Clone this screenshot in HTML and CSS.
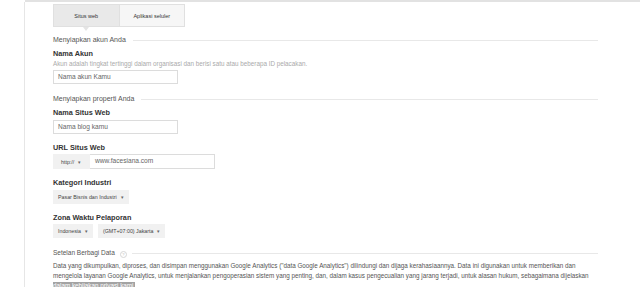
FILE: index.html
```html
<!DOCTYPE html>
<html lang="id">
<head>
    <meta charset="UTF-8">
    <title>Akun Baru - Google Analytics</title>
    <link rel="stylesheet" href="styles.css">
</head>
<body>
    <div class="topbar"></div>
    <div class="shell">
        <div class="form">
            <div class="tabs">
                <div class="tab active">Situs web</div>
                <div class="tab">Aplikasi seluler</div>
            </div>

            <h2 class="section">Menyiapkan akun Anda</h2>
            <div class="field">
                <label class="label">Nama Akun</label>
                <p class="hint">Akun adalah tingkat tertinggi dalam organisasi dan berisi satu atau beberapa ID pelacakan.</p>
                <div class="input">Nama akun Kamu</div>
            </div>

            <h2 class="section">Menyiapkan properti Anda</h2>
            <div class="field">
                <label class="label">Nama Situs Web</label>
                <div class="input">Nama blog kamu</div>
            </div>
            <div class="field">
                <label class="label">URL Situs Web</label>
                <div class="group">
                    <div class="select protocol">http:// <span class="caret">&#9662;</span></div>
                    <div class="input url">www.facesiana.com</div>
                </div>
            </div>
            <div class="field">
                <label class="label">Kategori Industri</label>
                <div class="select">Pasar Bisnis dan Industri <span class="caret">&#9662;</span></div>
            </div>
            <div class="field">
                <label class="label">Zona Waktu Pelaporan</label>
                <div class="group spaced">
                    <div class="select">Indonesia <span class="caret">&#9662;</span></div>
                    <div class="select">(GMT+07:00) Jakarta <span class="caret">&#9662;</span></div>
                </div>
            </div>

            <h2 class="section data">Setelan Berbagi Data <span class="help">?</span></h2>
            <p class="terms">Data yang dikumpulkan, diproses, dan disimpan menggunakan Google Analytics ("data Google Analytics") dilindungi dan dijaga kerahasiaannya. Data ini digunakan untuk memberikan dan mengelola layanan Google Analytics, untuk menjalankan pengoperasian sistem yang penting, dan, dalam kasus pengecualian yang jarang terjadi, untuk alasan hukum, sebagaimana dijelaskan <span class="mark">dalam kebijakan privasi kami.</span></p>
        </div>
    </div>
</body>
</html>
```

FILE: styles.css
```css
body {
    margin: 0;
    font-family: Arial, "Liberation Sans", sans-serif;
    background: #fff;
    color: #444;
}
.topbar {
    margin-left: 25px;
    height: 2px;
    background: #e2e2e2;
}
.shell {
    margin-left: 24px;
    border-left: 1px solid #e6e6e6;
}
.form {
    padding: 2px 0 0 28px;
    width: 545px;
}
.tabs {
    display: flex;
    width: 132px;
    height: 23px;
    border: 1px solid #e0e0e0;
    box-sizing: border-box;
    margin-bottom: 8px;
}
.tab {
    flex: 1;
    display: flex;
    align-items: center;
    justify-content: center;
    font-size: 5.5px;
    color: #333;
    background: #f6f6f6;
    position: relative;
}
.tab.active {
    background: #e9e9e9;
    border-right: 1px solid #e0e0e0;
}
.tab.active::after {
    content: "";
    position: absolute;
    left: 50%;
    bottom: -5px;
    margin-left: -3px;
    border-left: 3px solid transparent;
    border-right: 3px solid transparent;
    border-top: 4px solid #e4e4e4;
}
.section {
    display: flex;
    align-items: center;
    margin: 0;
    font-size: 7px;
    font-weight: normal;
    color: #555;
    height: 10px;
    line-height: 10px;
}
.section::after {
    content: "";
    flex: 1;
    height: 1px;
    background: #e8e8e8;
    margin-left: 7px;
}
.help {
    display: inline-block;
    width: 5px;
    height: 5px;
    line-height: 5px;
    border-radius: 50%;
    border: 1px solid #d6d6d6;
    color: #bbb;
    font-size: 4px;
    text-align: center;
    margin: 3px 0 0 5px;
}
.field {
    margin: 3px 0 0;
}
.label {
    display: block;
    font-size: 7.3px;
    font-weight: bold;
    color: #333;
    line-height: 10px;
}
.hint {
    margin: 0 0 2px;
    font-size: 6.3px;
    color: #aaa;
    line-height: 9px;
}
.input {
    width: 125px;
    height: 14px;
    box-sizing: border-box;
    border: 1px solid #dcdcdc;
    font-size: 6.6px;
    color: #666;
    line-height: 12px;
    padding-left: 4px;
    margin-top: 2px;
}
.field + .section {
    margin-top: 10px;
}
.field + .field {
    margin-top: 9px;
}
.section + .field {
    margin-top: 4px;
}
.group {
    display: flex;
    margin-top: 1px;
}
.group .input {
    margin-top: 0;
}
.group.spaced {
    gap: 5px;
}
.select {
    display: flex;
    align-items: center;
    width: max-content;
    height: 14px;
    box-sizing: border-box;
    padding: 0 5px;
    background: #f1f1f1;
    font-size: 5.3px;
    color: #444;
    margin-top: 2px;
}
.select.protocol {
    width: 37px;
    height: 15px;
    padding-left: 8px;
}
.group .select {
    margin-top: 0;
}
.caret {
    margin-left: 4px;
    font-size: 5px;
    color: #666;
}
.input.url {
    width: 125px;
    height: 15px;
    border-left: none;
    padding-left: 5px;
}
.section.data {
    margin-top: 10px;
    font-size: 6.5px;
}
.section.data::after {
    margin-left: 5px;
}
.terms {
    margin: 3px 0 0;
    font-size: 6.3px;
    color: #555;
    line-height: 10px;
}
.mark {
    background: #a3a3a3;
    color: #fff;
}
```
